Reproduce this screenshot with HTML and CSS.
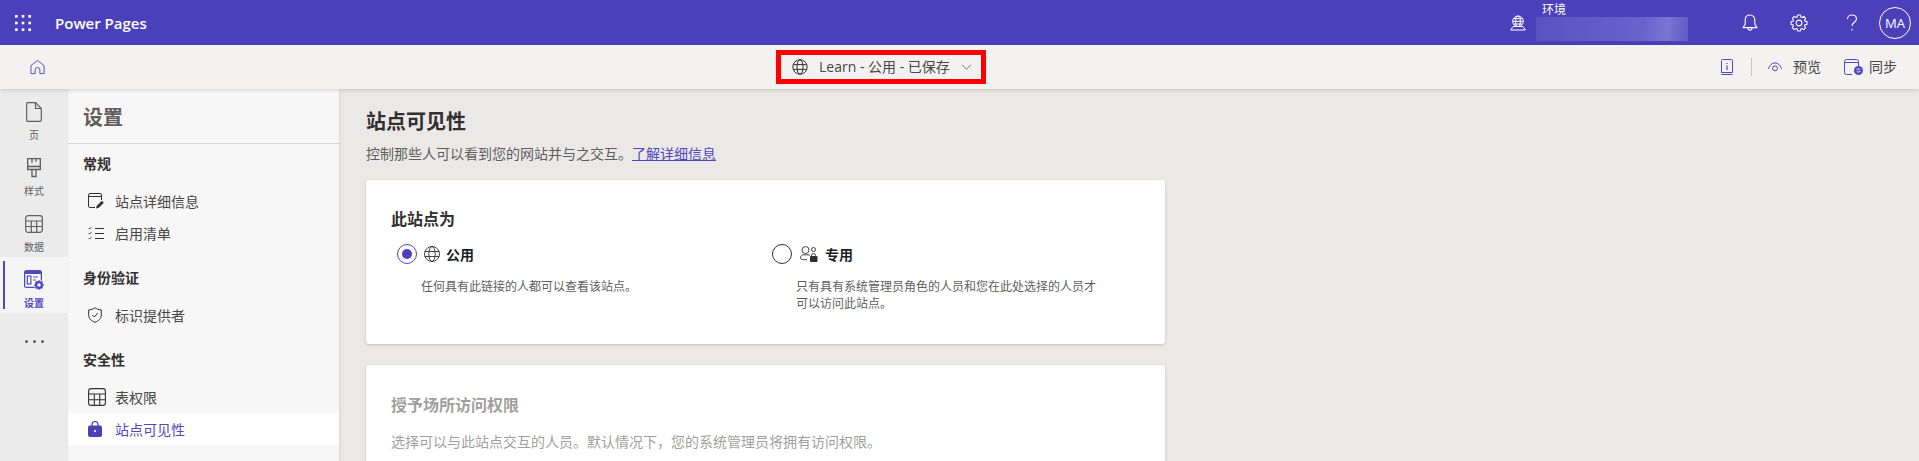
FILE: index.html
```html
<!DOCTYPE html>
<html lang="zh-CN">
<head>
<meta charset="utf-8">
<title>Power Pages</title>
<link rel="stylesheet" href="styles.css">
</head>
<body>
<div class="app">
  <header class="topbar">
    <button class="waffle" aria-label="apps">
      <svg viewBox="0 0 16 16" width="16" height="16" fill="#fff"><rect x="0" y="0" width="2.6" height="2.6"/><rect x="6.7" y="0" width="2.6" height="2.6"/><rect x="13.4" y="0" width="2.6" height="2.6"/><rect x="0" y="6.7" width="2.6" height="2.6"/><rect x="6.7" y="6.7" width="2.6" height="2.6"/><rect x="13.4" y="6.7" width="2.6" height="2.6"/><rect x="0" y="13.4" width="2.6" height="2.6"/><rect x="6.7" y="13.4" width="2.6" height="2.6"/><rect x="13.4" y="13.4" width="2.6" height="2.6"/></svg>
    </button>
    <div class="brand">Power Pages</div>
    <div class="env">
      <svg class="env-icon" viewBox="0 0 16 16" width="16" height="16" fill="none" stroke="#fff" stroke-width="1"><circle cx="8" cy="6.3" r="5.3"/><ellipse cx="8" cy="6.3" rx="2.3" ry="5.3"/><path d="M2.7 6.3h10.6M3.5 3.6h9M3.5 9h9"/><path d="M3 11.5h10l2.3 3.5H.7z" fill="#4a41ba"/></svg>
      <div class="env-text">
        <span class="env-label">环境</span>
        <span class="env-blur"></span>
      </div>
    </div>
    <div class="top-actions">
      <svg class="bell" viewBox="0 0 16 18" width="16" height="18" fill="none" stroke="#fff" stroke-width="1.1"><path d="M8 1C4.800 1 3.200 3.400 3.200 6v4.200L1 13.600h14l-2.200-3.400V6C12.800 3.400 11.200 1 8 1z" stroke-linejoin="round"/><path d="M6 14c.1 1.400 1 2.200 2 2.200s1.900-.8 2-2.200"/></svg>
      <svg class="gear" viewBox="0 0 20 20" width="18" height="18" fill="none" stroke="#fff" stroke-width="1.200" stroke-linejoin="round">
        <defs><path id="gear-tooth" d="M16.600 7.980L18.860 8.440 18.860 11.560 16.600 12.020 16.090 13.240"/></defs>
        <circle cx="10" cy="10" r="3.200"/>
        <use href="#gear-tooth"/>
        <use href="#gear-tooth" transform="rotate(45 10 10)"/>
        <use href="#gear-tooth" transform="rotate(90 10 10)"/>
        <use href="#gear-tooth" transform="rotate(135 10 10)"/>
        <use href="#gear-tooth" transform="rotate(180 10 10)"/>
        <use href="#gear-tooth" transform="rotate(225 10 10)"/>
        <use href="#gear-tooth" transform="rotate(270 10 10)"/>
        <use href="#gear-tooth" transform="rotate(315 10 10)"/>
      </svg>
      <svg class="help" viewBox="0 0 12 18" width="12" height="18" fill="none" stroke="#fff" stroke-width="1.1"><path d="M1.500 5c0-2.500 2-4 4.500-4s4.500 1.600 4.500 4c0 3.200-4.500 3.400-4.500 7"/><circle cx="6" cy="15.800" r=".8" fill="#fff" stroke="none"/></svg>
      <div class="avatar">MA</div>
    </div>
  </header>

  <div class="toolbar">
    <svg class="home" viewBox="0 0 16 16" width="15" height="16" fill="none" stroke="#4f48bf" stroke-width="1"><path d="M8 1L1 6.500V15h4.500v-4a2.500 2.500 0 0 1 5 0v4H15V6.500z" stroke-linejoin="round"/></svg>
    <div class="site-select">
      <svg viewBox="0 0 16 16" width="16" height="16" fill="none" stroke="#323130" stroke-width="1"><circle cx="8" cy="8" r="7.200"/><ellipse cx="8" cy="8" rx="3" ry="7.200"/><path d="M1.300 5.600h13.400M1.300 10.400h13.400"/></svg>
      <span class="site-name">Learn - 公用 - 已保存</span>
      <svg viewBox="0 0 12 8" width="11" height="7" fill="none" stroke="#605e5c" stroke-width="1"><path d="M1 1l5 5 5-5"/></svg>
    </div>
    <div class="tool-actions">
      <svg class="book" viewBox="0 0 12 16" width="12" height="16" fill="none" stroke="#4f48bf" stroke-width="1"><path d="M.5 15.500h11M.5 13.500V1.500a1 1 0 0 1 1-1h9a1 1 0 0 1 1 1v12z"/><path d="M6 4v1M6 6.500v4.500" stroke-width="1.200"/></svg>
      <span class="sep"></span>
      <button class="tool-btn tool-preview">
        <svg viewBox="0 0 16 11" width="16" height="10" fill="none" stroke="#4f48bf" stroke-width="1.100"><path d="M.7 7.500C2.500 3 5 1 8 1s5.500 2 7.300 6.500"/><circle cx="8" cy="7" r="2.700"/></svg>
        <span>预览</span>
      </button>
      <button class="tool-btn tool-sync">
        <svg viewBox="0 0 20 16" width="20" height="16" fill="none" stroke="#4f48bf" stroke-width="1"><path d="M8 15.500H2.500a2 2 0 0 1-2-2v-11a2 2 0 0 1 2-2h10a2 2 0 0 1 2 2V7"/><path d="M.5 3.500h14"/><circle cx="14.500" cy="11.500" r="4.500" fill="#4f48bf" stroke="none"/><path d="M12.500 11c.4-1 2.900-1.600 3.800-.2M16.500 12c-.4 1-2.900 1.600-3.800.2" stroke="#fff" stroke-width=".9"/></svg>
        <span>同步</span>
      </button>
    </div>
  </div>

  <div class="main">
    <nav class="rail">
      <a class="rail-item">
        <svg viewBox="0 0 16 20" width="16" height="20" fill="none" stroke="#605e5c" stroke-width="1.200"><path d="M1.500.7h8l5.800 5.800v11.300a1.500 1.500 0 0 1-1.500 1.500H1.500A1 1 0 0 1 .7 18V1.700a1 1 0 0 1 .8-1z"/><path d="M9.500 1v5.500h5.500"/></svg>
        <span>页</span>
      </a>
      <a class="rail-item">
        <svg viewBox="0 0 14 20" width="14" height="20" fill="none" stroke="#605e5c" stroke-width="1.300"><path d="M.7.700h12.600v10.800H.7zM.7 8.500h12.600M5 11.500v7h4v-7"/><path d="M5 .7v4M9 .7v3"/></svg>
        <span>样式</span>
      </a>
      <a class="rail-item">
        <svg viewBox="0 0 18 18" width="18" height="18" fill="none" stroke="#605e5c" stroke-width="1.200"><rect x=".7" y=".7" width="16.600" height="16.600" rx="2.500"/><path d="M.7 6h16.600M.7 11.500h16.600M6.300 6v11.300M11.700 6v11.300"/></svg>
        <span>数据</span>
      </a>
      <a class="rail-item is-active">
        <svg viewBox="0 0 20 20" width="20" height="20"><rect x="0" y="0" width="18" height="18" rx="2.500" fill="#4f48bf"/><rect x="1.300" y="4" width="15.400" height="12.700" fill="#fff"/><rect x="3.300" y="6" width="3.600" height="8" fill="none" stroke="#4f48bf" stroke-width="1.200"/><path d="M9 7h5M9 10h3" stroke="#4f48bf" stroke-width="1.200"/><circle cx="15" cy="15" r="5" fill="#fff"/><circle cx="15" cy="15" r="2.900" fill="none" stroke="#4f48bf" stroke-width="2.300"/><path d="M15 10.200v1.800M15 18v1.800M10.200 15H12M18 15h1.800M11.600 11.600l1.200 1.200M17.200 17.200l1.200 1.200M18.400 11.600l-1.200 1.200M12.800 17.200l-1.200 1.200" stroke="#4f48bf" stroke-width="1.500"/></svg>
        <span>设置</span>
      </a>
      <a class="rail-more"><i></i><i></i><i></i></a>
    </nav>

    <aside class="panel">
      <h2 class="panel-title">设置</h2>
      <div class="panel-body">
        <h3 class="group-title">常规</h3>
        <a class="nav-item">
          <svg viewBox="0 0 16 16" width="16" height="16" fill="none" stroke="#323130" stroke-width="1"><path d="M7 14.500H2a1.500 1.500 0 0 1-1.500-1.500V2A1.500 1.500 0 0 1 2 .5h10A1.500 1.500 0 0 1 13.500 2v5M.5 3.500h13"/><path d="M8 15.500l.8-2.800 5-5 2 2-5 5z" fill="#323130" stroke="none"/></svg>
          <span>站点详细信息</span>
        </a>
        <a class="nav-item">
          <svg viewBox="0 0 16 14" width="16" height="14" fill="none" stroke="#323130" stroke-width="1"><path d="M.5 2l1.200 1.200L3.500.8M.5 7l1.200 1.200 1.800-2.400M.5 12l1.200 1.200 1.800-2.400" stroke-dasharray="1.200 .5"/><path d="M7 2.500h9M7 7.500h9M7 12.500h9"/></svg>
          <span>启用清单</span>
        </a>
        <h3 class="group-title">身份验证</h3>
        <a class="nav-item">
          <svg viewBox="0 0 14 16" width="14" height="16" fill="none" stroke="#323130" stroke-width="1"><path d="M7 .7c1.700 1.400 3.800 2.100 6.300 2.200v5c0 3.300-2.200 5.900-6.300 7.400C2.900 13.800.7 11.200.7 7.900v-5C3.200 2.800 5.300 2.100 7 .7z"/><path d="M4.300 8l2 2 3.500-4"/></svg>
          <span>标识提供者</span>
        </a>
        <h3 class="group-title">安全性</h3>
        <a class="nav-item">
          <svg viewBox="0 0 18 18" width="18" height="18" fill="none" stroke="#323130" stroke-width="1.100"><rect x=".6" y=".6" width="16.800" height="16.800" rx="2.500"/><path d="M.6 6h16.800M.6 11.700h16.800M6.300 6v11.400M11.700 6v11.400"/></svg>
          <span>表权限</span>
        </a>
        <a class="nav-item is-active">
          <svg viewBox="0 0 14 16" width="14" height="16"><path d="M4 5V3.500a3 3 0 0 1 6 0V5" fill="none" stroke="#4a41ba" stroke-width="1.200"/><rect x="0" y="4.500" width="14" height="11.500" rx="2" fill="#4a41ba"/><circle cx="7" cy="10" r="1.100" fill="#fff"/></svg>
          <span>站点可见性</span>
        </a>
      </div>
    </aside>

    <section class="content">
      <h1 class="page-title">站点可见性</h1>
      <p class="page-desc">控制那些人可以看到您的网站并与之交互。<a class="link">了解详细信息</a></p>

      <div class="card card-visibility">
        <h2 class="card-title">此站点为</h2>
        <div class="options">
          <div class="option option-public">
            <div class="option-head">
              <span class="radio is-checked"></span>
              <svg viewBox="0 0 16 16" width="16" height="16" fill="none" stroke="#323130" stroke-width=".9"><circle cx="8" cy="8" r="7.500"/><ellipse cx="8" cy="8" rx="3.200" ry="7.500"/><path d="M.8 5.500h14.400M.8 10.500h14.400"/></svg>
              <span class="option-name">公用</span>
            </div>
            <p class="option-desc">任何具有此链接的人都可以查看该站点。</p>
          </div>
          <div class="option option-private">
            <div class="option-head">
              <span class="radio"></span>
              <svg class="people" viewBox="0 0 18 16" width="18" height="16" fill="none" stroke="#323130" stroke-width=".9"><circle cx="5.500" cy="4" r="3.500"/><path d="M.5 12c0-2 1.500-3.200 3-3.200h4.500c.8 0 1.500.2 2 .6M.5 12c0 1 1.500 1.700 3.500 1.700h3"/><circle cx="13.500" cy="3.500" r="2"/><path d="M11.500 10.500v-1a2 2 0 0 1 4 0v1" /><rect x="10" y="10" width="7.500" height="6" rx=".8" fill="#323130" stroke="none"/></svg>
              <span class="option-name">专用</span>
            </div>
            <p class="option-desc">只有具有系统管理员角色的人员和您在此处选择的人员才可以访问此站点。</p>
          </div>
        </div>
      </div>

      <div class="card card-access">
        <h2 class="card-title">授予场所访问权限</h2>
        <p class="card-desc">选择可以与此站点交互的人员。默认情况下，您的系统管理员将拥有访问权限。</p>
      </div>
    </section>
  </div>
</div>
</body>
</html>
```

FILE: styles.css
```css
* { box-sizing: border-box; }
html, body { margin: 0; padding: 0; height: 100%; overflow: hidden; }
body {
  font-family: "Open Sans", "Noto Sans CJK SC", sans-serif;
  color: #323130;
  background: #ebe9e7;
}
h1, h2, h3, p { margin: 0; }
button { background: none; border: 0; padding: 0; font: inherit; color: inherit; }
svg { display: block; flex: none; }

.app { width: 1919px; height: 461px; display: flex; flex-direction: column; overflow: hidden; }

/* top bar */
.topbar {
  height: 45px; flex: none; display: flex; align-items: center;
  background: #4a41ba; color: #fff;
}
.waffle { margin-left: 15px; width: 16px; height: 16px; }
.brand { margin-left: 24px; font-size: 15px; font-weight: 600; line-height: 20px; white-space: nowrap; }
.env { margin-left: auto; display: flex; align-items: flex-start; height: 45px; }
.env-icon { margin-top: 15px; }
.env-text { margin-left: 10px; display: flex; flex-direction: column; width: 152px; position: relative; }
.env-label { font-size: 12px; line-height: 16px; margin: 2px 0 0 6px; height: 15px; }
.env-blur {
  height: 24px; width: 152px;
  background: linear-gradient(95deg, #5a52c2 0%, #625ac6 40%, #6a63cb 70%, #7a74d2 86%, #625ac6 100%);
}
.top-actions { margin-left: 54px; margin-right: 8px; display: flex; align-items: center; }
.gear { margin-left: 32px; }
.help { margin-left: 38px; }
.avatar {
  margin-left: 21px; width: 32px; height: 32px; border-radius: 50%;
  border: 1px solid #fff; font-size: 13px; font-weight: 400;
  display: flex; align-items: center; justify-content: center;
}

/* toolbar */
.toolbar {
  height: 44px; flex: none; display: flex; align-items: center;
  background: #f3f2f1; position: relative; z-index: 2;
  box-shadow: 0 1px 4px rgba(0,0,0,.16);
}
.home { margin-left: 30px; }
.site-select {
  margin-left: 731px; width: 210px; height: 34px; border: 5px solid #fe0000;
  display: flex; align-items: center; padding-left: 11px;
}
.site-name { margin-left: 11px; font-size: 14px; line-height: 18px; color: #484644; white-space: nowrap; }
.site-select svg:last-child { margin-left: 11px; }
.tool-actions { margin-left: auto; margin-right: 22px; display: flex; align-items: center; }
.sep { width: 1px; height: 18px; background: #c8c6c4; margin-left: 18px; }
.tool-btn { display: flex; align-items: center; font-size: 14px; line-height: 20px; color: #484644; }
.tool-preview { margin-left: 15px; gap: 10px; }
.tool-sync { margin-left: 23px; gap: 5px; }

/* main */
.main { flex: 1; min-height: 0; display: flex; }
.rail { width: 68px; flex: none; background: #ebebeb; display: flex; flex-direction: column; }
.rail-item {
  height: 56px; flex: none; display: flex; flex-direction: column; align-items: center; justify-content: flex-start;
  padding-top: 13px; font-size: 10px; line-height: 14px; color: #605e5c; position: relative;
}
.rail-item svg { height: 20px; }
.rail-item span { margin-top: 6px; }
.rail-item.is-active { background: #f5f5f5; color: #4f48bf; font-weight: 600; }
.rail-item.is-active::before {
  content: ""; position: absolute; left: 3px; top: 4px; bottom: 4px; width: 2px; background: #4f48bf;
}
.rail-more { height: 56px; display: flex; align-items: center; justify-content: center; gap: 5px; }
.rail-more i { width: 3px; height: 3px; border-radius: 50%; background: #605e5c; }

.panel {
  width: 271px; flex: none; background: #f7f7f7; display: flex; flex-direction: column;
  box-shadow: 1px 0 3px rgba(0,0,0,.08); position: relative;
}
.panel-title {
  height: 55px; flex: none; border-bottom: 1px solid #d6d5d4; padding: 15px 0 0 15px;
  font-size: 20px; font-weight: 600; line-height: 28px; color: #605e5c;
}
.panel-body { padding-top: 10px; }
.group-title { font-size: 14px; font-weight: 600; line-height: 20px; margin: 19px 0 11px; padding-left: 15px; color: #323130; }
.group-title:first-child { margin-top: 0; }
.nav-item { height: 32px; display: flex; align-items: center; font-size: 14px; color: #484644; position: relative; padding-left: 47px; }
.nav-item svg { position: absolute; left: 20px; top: 50%; transform: translateY(-50%); }
.nav-item.is-active { background: #fff; color: #4f48bf; }

/* content */
.content { flex: 1; min-width: 0; padding: 19px 0 0 27px; }
.page-title { font-size: 20px; font-weight: 700; line-height: 28px; color: #323130; }
.page-desc { margin-top: 8px; font-size: 14px; line-height: 20px; color: #605e5c; }
.link { color: #4f48bf; text-decoration: underline; }
.card {
  width: 799px; background: #fff; border-radius: 3px;
  box-shadow: 0 1px 3px rgba(0,0,0,.18);
}
.card-visibility { height: 164px; margin-top: 16px; padding: 28px 25px 0; }
.card-title { font-size: 16px; font-weight: 600; line-height: 22px; color: #323130; }
.options { display: flex; margin-top: 14px; }
.option-public { width: 381px; padding-left: 6px; }
.option-private { width: 350px; }
.option-head { display: flex; align-items: center; height: 20px; }
.radio { width: 20px; height: 20px; border-radius: 50%; border: 1px solid #323130; flex: none; position: relative; }
.radio.is-checked { border-color: #4f48bf; }
.radio.is-checked::after {
  content: ""; position: absolute; inset: 4px; border-radius: 50%; background: #4a41ba;
}
.option-head svg { margin-left: 7px; }
.option-head .people { margin-left: 8px; }
.option-name { margin-left: 6px; font-size: 14px; font-weight: 600; color: #201f1e; }
.option-private .option-name { margin-left: 7px; }
.option-desc { margin: 14px 0 0 24px; width: 306px; font-size: 12px; line-height: 17px; color: #605e5c; }
.card-access { height: 200px; margin-top: 21px; padding: 29px 25px 0; }
.card-access .card-title { color: #a19f9d; }
.card-desc { margin-top: 16px; font-size: 14px; line-height: 20px; color: #a19f9d; }
```
